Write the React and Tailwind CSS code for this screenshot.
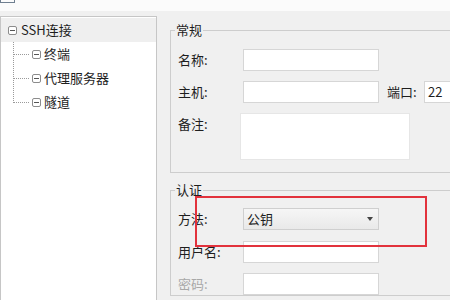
import React from 'react';

const Box = () => (
  <span className="flex h-[9px] w-[9px] shrink-0 items-center justify-center rounded-[2px] border border-[#8c8c8c] bg-white">
    <span className="h-px w-[5px] bg-[#555]" />
  </span>
);

const TreeChild = ({ label }) => (
  <div className="flex h-[24px] items-center">
    <span className="ml-[12px] mr-[3px] w-[16px] border-t border-dotted border-[#9a9a9a]" />
    <Box />
    <span className="ml-[3px]">{label}</span>
  </div>
);

const Field = ({ className = '', children }) => (
  <div className={`h-[22px] border border-[#d6d6d6] bg-white ${className}`}>{children}</div>
);

const App = () => {
  return (
    <div
      className="relative flex h-[300px] w-[450px] flex-col overflow-hidden bg-[#f0f0f0] text-[13px] text-[#1e1e1e]"
      style={{ fontFamily: '"Noto Sans CJK SC", "Noto Sans", sans-serif' }}
    >
      {/* title strip */}
      <div className="h-[11px] shrink-0 bg-[#fbfbfb]">
        <span className="block h-[3px] w-[15px] border-x border-b border-[#6f7f90]" />
      </div>

      <div className="flex flex-1">
        {/* tree */}
        <div className="mt-[5px] w-[157px] shrink-0 border-l border-r border-t border-[#c6c6c6] bg-white pt-px leading-[16px]">
          <div className="flex h-[24px] items-center bg-[#efefef] pl-[7px]">
            <Box />
            <span className="ml-[4px]">SSH连接</span>
          </div>
          <div className="relative">
            <span className="absolute left-[12px] top-0 h-[61px] border-l border-dotted border-[#9a9a9a]" />
            <TreeChild label="终端" />
            <TreeChild label="代理服务器" />
            <TreeChild label="隧道" />
          </div>
        </div>

        {/* form */}
        <div className="flex-1 pl-[13px] pt-[11px]">
          <fieldset className="w-[300px] border border-[#cdcdcd] pb-[12px] pt-[11px]">
            <legend className="ml-[4px] px-px leading-[16px]">常规</legend>
            <div className="flex flex-col gap-[10px]">
              <div className="flex items-center">
                <span className="w-[72px] pl-[7px]">名称:</span>
                <Field className="w-[136px]" />
              </div>
              <div className="flex items-center">
                <span className="w-[72px] pl-[7px]">主机:</span>
                <Field className="w-[136px]" />
                <span className="ml-[8px] w-[37px]">端口:</span>
                <Field className="w-[40px] pl-[3px] leading-[20px]">22</Field>
              </div>
              <div className="flex items-start">
                <span className="w-[72px] pl-[7px] pt-px">备注:</span>
                <div className="-ml-[3px] h-[47px] w-[170px] border border-[#e6e6e6] bg-white" />
              </div>
            </div>
          </fieldset>

          <fieldset className="mt-[9px] w-[300px] border border-[#cdcdcd] pt-[10px]">
            <legend className="ml-[4px] px-px leading-[16px]">认证</legend>
            <div className="flex flex-col">
              <div className="flex items-center">
                <span className="w-[72px] pl-[7px]">方法:</span>
                <div className="flex h-[22px] w-[136px] items-center justify-between border border-[#cfcfcf] bg-gradient-to-b from-[#f6f6f6] to-[#e9e9e9] pl-[3px] pr-[5px]">
                  <span>公钥</span>
                  <span className="h-0 w-0 border-x-[3px] border-t-[4px] border-x-transparent border-t-[#444]" />
                </div>
              </div>
              <div className="mt-[11px] flex items-center">
                <span className="w-[72px] pl-[7px]">用户名:</span>
                <Field className="h-[21px] w-[136px]" />
              </div>
              <div className="mt-[10px] flex items-center">
                <span className="w-[72px] pl-[7px] text-[#a8a8a8]">密码:</span>
                <Field className="w-[136px]" />
              </div>
            </div>
          </fieldset>
        </div>
      </div>

      {/* annotation */}
      <div className="pointer-events-none absolute left-[195px] top-[196px] h-[51px] w-[232px] border-2 border-[#e2323c]" />
    </div>
  );
};

export default App;
